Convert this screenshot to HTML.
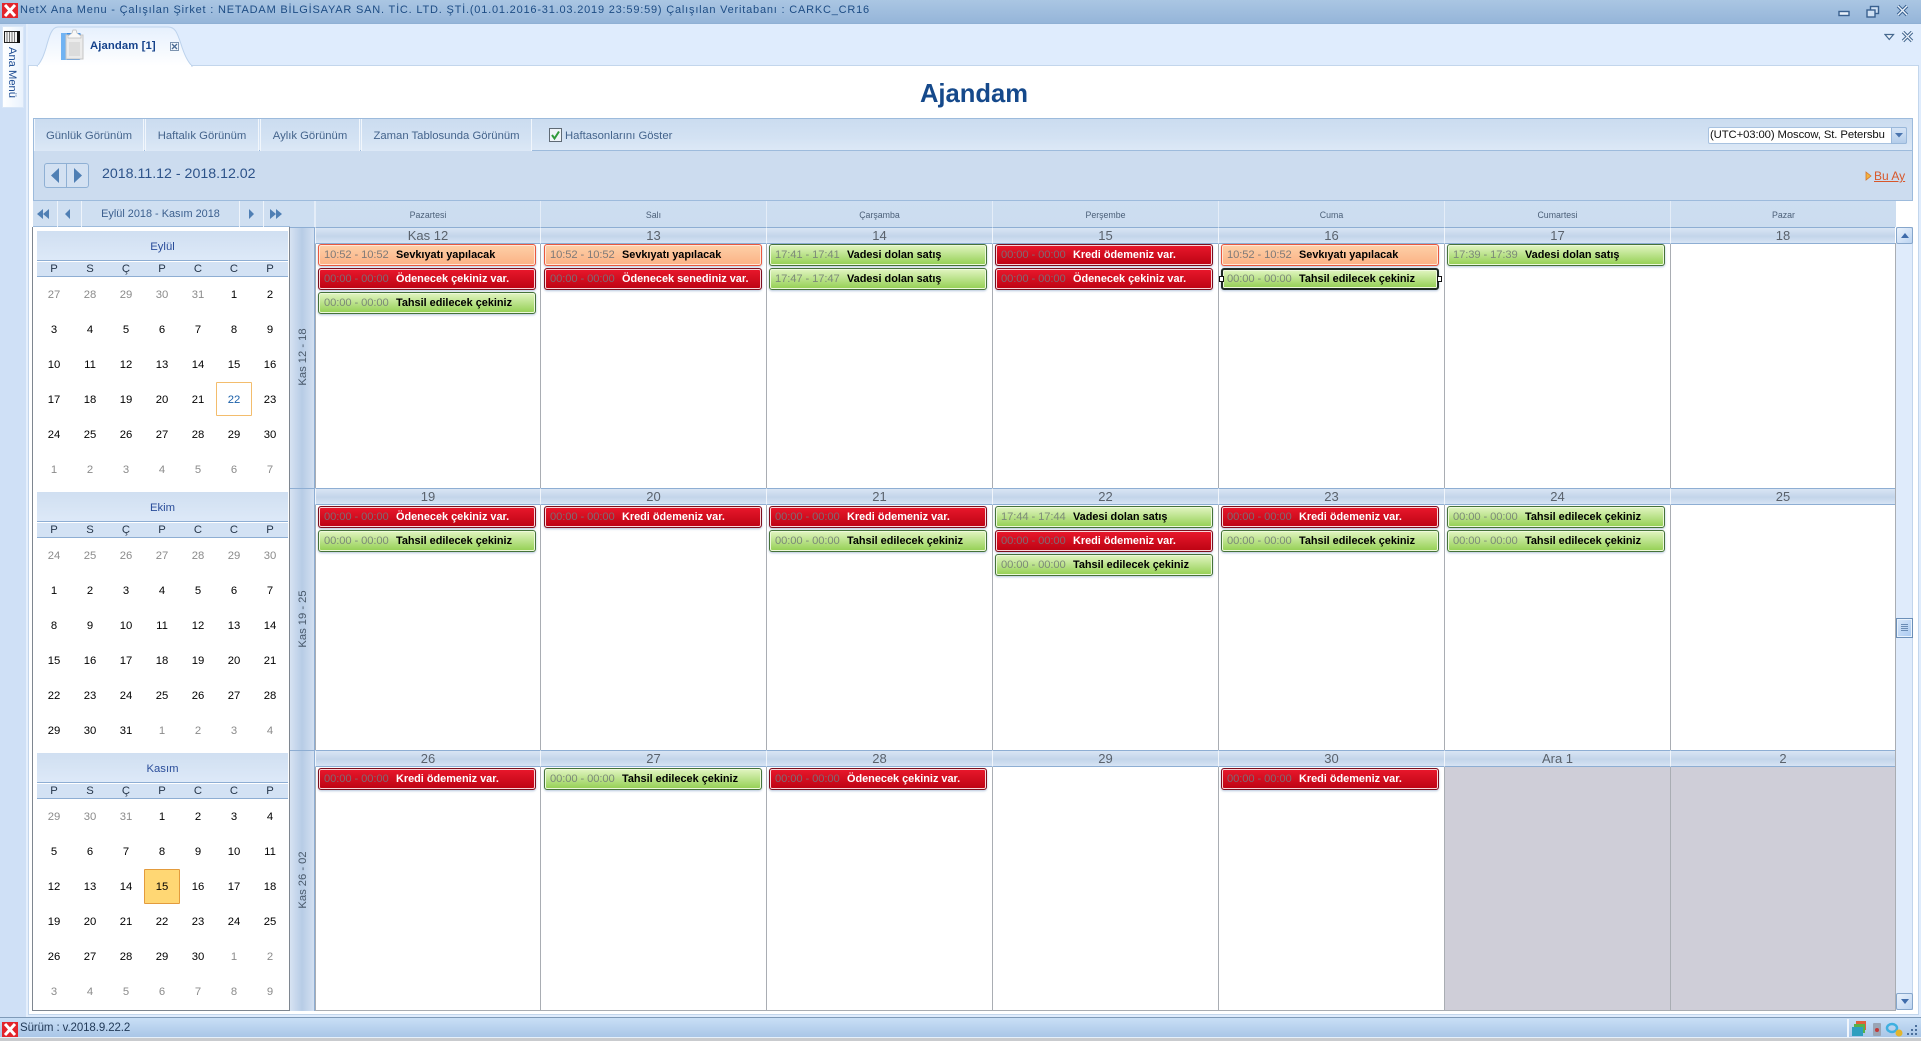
<!DOCTYPE html>
<html lang="tr"><head><meta charset="utf-8"><title>NetX Ajandam</title>
<style>
html,body{margin:0;padding:0}
body{width:1921px;height:1041px;position:relative;overflow:hidden;background:#dfecfd;font-family:"Liberation Sans",sans-serif;font-size:11px;color:#000}
div,span,svg{position:absolute;box-sizing:border-box}
.btn{top:119px;height:32px;line-height:34px;text-align:center;color:#44648c;font-size:11.3px;background:linear-gradient(#cbdcf0,#d3e2f3 60%,#dce8f6);border-right:1px solid #f1f6fc;border-left:1px solid #f1f6fc}
.dn{top:201px;height:26px;line-height:29px;text-align:center;font-size:8.8px;color:#4b5f78;background:linear-gradient(#cddef1,#cbdcef);border-left:1px solid #e4edf8}
.dt{top:227px;height:17px;line-height:16px;text-align:center;font-size:13px;color:#5a626c;background:linear-gradient(#d9e5f4,#c3d5ea 55%,#d7e4f4);border-top:1px solid #8eaed3;border-bottom:1px solid #8eaed3;border-left:1px solid #f0f5fb}
.r2{top:488px}.r3{top:750px}
.vl{width:1px;background:#a9adb3;top:243px;height:767px}
.wk{left:290px;width:25px;background:linear-gradient(90deg,#d7e3f2,#b7cce6 50%,#d3e0f1);border-right:1px solid #8eaed3;border-top:1px solid #8eaed3}
.wt{left:-37px;width:100px;text-align:center;font-size:11.2px;color:#49596b;transform:rotate(-90deg);line-height:14px}
.e{width:218px;height:22px;border-radius:3px;line-height:20px;font-size:10.9px;font-weight:bold;white-space:nowrap;box-shadow:0 1px 2px rgba(120,150,190,.55)}
.e i{position:absolute;left:5px;top:0;font-style:normal;font-weight:normal;font-size:11.2px;letter-spacing:-.1px}
.e b{position:absolute;left:77px;top:0}
.o{background:linear-gradient(#fdd0a8,#fcb285);border:1px solid #e9573e;color:#000;box-shadow:inset 0 0 0 1px #ffe8d6,0 1px 2px rgba(120,150,190,.55)}
.o i{color:#7f7a78}
.r{background:linear-gradient(#e9182c,#bc0313);border:1px solid #7d0d1c;color:#fff;box-shadow:inset 0 0 0 1px #f9d6d9,0 1px 2px rgba(120,150,190,.55)}
.r i{color:#7e6a72}
.g{background:linear-gradient(#e2f5c2,#93cf52);border:1px solid #457239;color:#000;box-shadow:inset 0 0 0 1px #eef9db,0 1px 2px rgba(120,150,190,.55)}
.g i{color:#7c8a78}
.mh{left:37px;width:251px;height:30px;line-height:32px;text-align:center;font-size:11.3px;color:#2a4d9a;background:linear-gradient(#d0dff1,#dde9f8);border-bottom:1px solid #8eaed3}
.dw{left:37px;width:251px;height:15px;background:#d3e2f4;border-bottom:1px solid #8eaed3;display:grid;grid-template-columns:repeat(7,36px);font-size:11.3px;line-height:15px;text-align:center;color:#26364a;text-indent:-2px}
.dw span,.m span{position:static}
.m{left:36px;width:252px;display:grid;grid-template-columns:repeat(7,36px);grid-auto-rows:35px;line-height:35px;text-align:center;font-size:11.3px;color:#000}
.m u{text-decoration:none;color:#8b8b8b}
</style></head>
<body>
<!-- title bar -->
<div style="left:0;top:0;width:1921px;height:24px;background:linear-gradient(#aac6e3,#95b5d9);border-bottom:1px solid #8fb0d4"></div>
<svg style="left:2px;top:3px" width="16" height="15" viewBox="0 0 16 15"><rect width="16" height="15" fill="#e3242b"/><path d="M3 2l10 11M13 2L3 13" stroke="#fff" stroke-width="3"/></svg>
<div style="left:20px;top:3px;line-height:15px;font-size:11px;letter-spacing:.8px;color:#1d4c84;white-space:nowrap">NetX Ana Menu - Çalışılan Şirket : NETADAM BİLGİSAYAR SAN. TİC. LTD. ŞTİ.(01.01.2016-31.03.2019 23:59:59) Çalışılan Veritabanı : CARKC_CR16</div>
<svg style="left:1836px;top:4px" width="80" height="14" viewBox="0 0 80 14" fill="none" stroke="#39608f"><rect x="3" y="7.500" width="10" height="4" fill="#e8f0fa" stroke-width="1.400"/><rect x="34.500" y="2.500" width="8" height="7" fill="#cfe0f3" stroke-width="1.400"/><rect x="31" y="6" width="8" height="7" fill="#cfe0f3" stroke-width="1.400"/><path d="M62 2l9 9M71 2l-9 9" stroke="#39608f" stroke-width="3.400"/><path d="M62 2l9 9M71 2l-9 9" stroke="#eaf2fb" stroke-width="1.400"/></svg>
<!-- left strip -->
<div style="left:0;top:24px;width:26px;height:993px;background:#cfe0f6"></div>
<div style="left:26px;top:24px;width:2px;height:993px;background:#e5effc"></div>
<div style="left:2px;top:26px;width:22px;height:82px;background:linear-gradient(90deg,#fff,#e9f2fd);border:1px solid #d8e6f7"></div>
<svg style="left:4px;top:31px" width="16" height="12" viewBox="0 0 16 12"><rect x=".5" y=".5" width="15" height="11" fill="#f4f4f4" stroke="#222"/><path d="M3 1v10M5.500 1v10M8 1v10M10.500 1v10" stroke="#777"/><rect x="13" y="0" width="3" height="12" fill="#111"/></svg>
<div style="left:-13px;top:65px;width:50px;height:14px;line-height:14px;text-align:center;font-size:11.2px;color:#1d4c93;transform:rotate(90deg);white-space:nowrap">Ana Menü</div>
<!-- tab strip -->
<div style="left:28px;top:65px;width:1891px;height:950px;background:#fff;border:1px solid #c3d6ec"></div>
<svg style="left:36px;top:26px" width="160" height="41" viewBox="0 0 160 41"><defs><linearGradient id="tg" x1="0" x2="0" y1="0" y2="1"><stop offset="0" stop-color="#e6f0fd"/><stop offset="1" stop-color="#fff"/></linearGradient></defs><path d="M1.500 40C6 34 7.500 30 10 22 13.500 9 16 1 22 1H132C139 1 141 6 145 18 148 28 151 35 156 40Z" fill="url(#tg)" stroke="#bcd2ec"/><path d="M2 40H155" stroke="#fff" stroke-width="2"/></svg>
<svg style="left:60px;top:29px" width="24" height="32" viewBox="0 0 24 32"><rect x="1" y="4" width="20" height="27" rx="2" fill="#3e8fe6"/><rect x="1" y="4" width="6" height="27" fill="#70b3f3"/><rect x="6" y="6" width="17" height="24" fill="#ebebeb" stroke="#c6c6c6"/><path d="M8 7l4-3 1-3h3l1 3 4 3v2H8z" fill="#f8f8f8" stroke="#bbb" stroke-width=".7"/><rect x="9" y="13" width="11" height="14" fill="#dcdcdc"/></svg>
<div style="left:90px;top:39px;line-height:14px;font-size:11.3px;font-weight:bold;color:#15428b;white-space:nowrap;letter-spacing:.1px">Ajandam [1]</div>
<svg style="left:170px;top:42px" width="9" height="9" viewBox="0 0 9 9"><rect x=".5" y=".5" width="8" height="8" fill="#f3f7fc" stroke="#7d94b0"/><path d="M2 2l5 5M7 2L2 7" stroke="#4a6a92" stroke-width="1.300"/></svg>
<svg style="left:1884px;top:31px" width="30" height="12" viewBox="0 0 30 12" fill="none"><path d="M1 3.500h8.500L5.250 8.500Z" fill="#eef4fc" stroke="#45688f" stroke-width="1.200"/><path d="M19 1l9 9M28 1l-9 9" stroke="#45688f" stroke-width="3.400"/><path d="M19 1l9 9M28 1l-9 9" stroke="#eef4fc" stroke-width="1.300"/></svg>
<!-- heading -->
<div style="left:874px;top:77px;width:200px;text-align:center;line-height:34px;font-size:25.6px;font-weight:bold;color:#15498b;white-space:nowrap">Ajandam</div>
<!-- toolbar -->
<div style="left:33px;top:118px;width:1880px;height:83px;background:#ccdcef;border:1px solid #9dbbdc"></div>
<div style="left:33px;top:119px;width:1880px;height:32px;background:linear-gradient(#cbdcf0,#d3e2f3 60%,#dce8f6);border-bottom:1px solid #9dbbdc;border-left:1px solid #9dbbdc;border-right:1px solid #9dbbdc"></div>
<div class="btn" style="left:34px;width:110px">Günlük Görünüm</div>
<div class="btn" style="left:145px;width:114px">Haftalık Görünüm</div>
<div class="btn" style="left:260px;width:100px">Aylık Görünüm</div>
<div class="btn" style="left:361px;width:171px">Zaman Tablosunda Görünüm</div>
<svg style="left:549px;top:128px" width="13" height="14" viewBox="0 0 13 14"><rect x=".5" y=".5" width="12" height="13" fill="#eef3f8" stroke="#5f6a75"/><path d="M3 7l2.500 3.500L10 3.500" fill="none" stroke="#2f9a3a" stroke-width="2"/></svg>
<div style="left:565px;top:128px;line-height:16px;font-size:11.3px;color:#44648c;white-space:nowrap">Haftasonlarını Göster</div>
<div style="left:1708px;top:127px;width:199px;height:17px;background:#fff;border:1px solid #a8c2e0;border-radius:2px"></div>
<div style="left:1710px;top:127px;line-height:16px;font-size:11.3px;color:#111;white-space:nowrap;letter-spacing:-.1px">(UTC+03:00) Moscow, St. Petersbu</div>
<div style="left:1891px;top:127px;width:16px;height:17px;background:linear-gradient(#d5e4f6,#b4cdea);border:1px solid #9ab8da;border-radius:0 2px 2px 0"></div>
<svg style="left:1894px;top:132px" width="10" height="7" viewBox="0 0 10 7"><path d="M1 1h8L5 5.500Z" fill="#4a74ae"/></svg>
<!-- nav arrows -->
<div style="left:44px;top:163px;width:45px;height:25px;border:1px solid #8fb0d4;border-radius:3px;background:#d3e1f2"></div>
<div style="left:66px;top:164px;width:1px;height:23px;background:#8fb0d4"></div>
<svg style="left:50px;top:168px" width="36" height="15" viewBox="0 0 36 15"><path d="M9 0v15L1 7.500Z" fill="#4f7fb4"/><path d="M24 0v15l8-7.500Z" fill="#4f7fb4"/></svg>
<div style="left:102px;top:165px;line-height:18px;font-size:14.2px;color:#2c5289;white-space:nowrap">2018.11.12 - 2018.12.02</div>
<svg style="left:1865px;top:171px" width="7" height="10" viewBox="0 0 7 10"><path d="M1 1l5 4-5 4Z" fill="#f2b33d" stroke="#d6742a" stroke-width=".8"/></svg>
<div style="left:1874px;top:168px;line-height:16px;font-size:12px;color:#d8572a;text-decoration:underline;white-space:nowrap">Bu Ay</div>
<!-- mini calendar nav -->
<div style="left:33px;top:201px;width:257px;height:26px;background:#cfdff1;border-bottom:1px solid #9dbbdc"></div>
<div style="left:57px;top:201px;width:1px;height:26px;background:#eef4fb"></div><div style="left:81px;top:201px;width:1px;height:26px;background:#eef4fb"></div><div style="left:239px;top:201px;width:1px;height:26px;background:#eef4fb"></div><div style="left:263px;top:201px;width:1px;height:26px;background:#eef4fb"></div>
<svg style="left:37px;top:208px" width="248" height="12" viewBox="0 0 248 12" fill="#4f7fb4"><path d="M6 1v10L0 6ZM12 1v10L6 6ZM33 1v10l-5-5Z"/><path d="M212 1v10l5-5ZM233 1v10l6-5ZM239 1v10l6-5Z"/></svg>
<div style="left:82px;top:207px;width:157px;text-align:center;line-height:15px;font-size:10.9px;color:#3b5f8e;white-space:nowrap">Eylül 2018 - Kasım 2018</div>
<!-- mini calendar panel -->
<div style="left:32px;top:227px;width:258px;height:784px;background:#fff;border:1px solid #7e8690;border-top:0"></div>
<div class="mh" style="top:231px">Eylül</div>
<div class="dw" style="top:262px"><span>P</span><span>S</span><span>Ç</span><span>P</span><span>C</span><span>C</span><span>P</span></div>
<div style="left:216px;top:382px;width:36px;height:34px;border:1px solid #f3bd6d;border-radius:1px"></div>
<div class="m" style="top:278px"><span><u>27</u></span><span><u>28</u></span><span><u>29</u></span><span><u>30</u></span><span><u>31</u></span><span>1</span><span>2</span><span>3</span><span>4</span><span>5</span><span>6</span><span>7</span><span>8</span><span>9</span><span>10</span><span>11</span><span>12</span><span>13</span><span>14</span><span>15</span><span>16</span><span>17</span><span>18</span><span>19</span><span>20</span><span>21</span><span style="color:#1a5fa8">22</span><span>23</span><span>24</span><span>25</span><span>26</span><span>27</span><span>28</span><span>29</span><span>30</span><span><u>1</u></span><span><u>2</u></span><span><u>3</u></span><span><u>4</u></span><span><u>5</u></span><span><u>6</u></span><span><u>7</u></span></div>
<div class="mh" style="top:492px">Ekim</div>
<div class="dw" style="top:523px"><span>P</span><span>S</span><span>Ç</span><span>P</span><span>C</span><span>C</span><span>P</span></div>
<div class="m" style="top:539px"><span><u>24</u></span><span><u>25</u></span><span><u>26</u></span><span><u>27</u></span><span><u>28</u></span><span><u>29</u></span><span><u>30</u></span><span>1</span><span>2</span><span>3</span><span>4</span><span>5</span><span>6</span><span>7</span><span>8</span><span>9</span><span>10</span><span>11</span><span>12</span><span>13</span><span>14</span><span>15</span><span>16</span><span>17</span><span>18</span><span>19</span><span>20</span><span>21</span><span>22</span><span>23</span><span>24</span><span>25</span><span>26</span><span>27</span><span>28</span><span>29</span><span>30</span><span>31</span><span><u>1</u></span><span><u>2</u></span><span><u>3</u></span><span><u>4</u></span></div>
<div class="mh" style="top:753px">Kasım</div>
<div class="dw" style="top:784px"><span>P</span><span>S</span><span>Ç</span><span>P</span><span>C</span><span>C</span><span>P</span></div>
<div style="left:144px;top:869px;width:36px;height:35px;background:#ffd774;border:1px solid #e39b3d;border-radius:1px"></div>
<div class="m" style="top:800px"><span><u>29</u></span><span><u>30</u></span><span><u>31</u></span><span>1</span><span>2</span><span>3</span><span>4</span><span>5</span><span>6</span><span>7</span><span>8</span><span>9</span><span>10</span><span>11</span><span>12</span><span>13</span><span>14</span><span>15</span><span>16</span><span>17</span><span>18</span><span>19</span><span>20</span><span>21</span><span>22</span><span>23</span><span>24</span><span>25</span><span>26</span><span>27</span><span>28</span><span>29</span><span>30</span><span><u>1</u></span><span><u>2</u></span><span><u>3</u></span><span><u>4</u></span><span><u>5</u></span><span><u>6</u></span><span><u>7</u></span><span><u>8</u></span><span><u>9</u></span></div>
<!-- scheduler -->
<div style="left:290px;top:201px;width:25px;height:26px;background:#cddef1;border-right:1px solid #e4edf8"></div>
<div class="dn" style="left:315px;width:225px">Pazartesi</div><div class="dn" style="left:540px;width:226px">Salı</div><div class="dn" style="left:766px;width:226px">Çarşamba</div><div class="dn" style="left:992px;width:226px">Perşembe</div><div class="dn" style="left:1218px;width:226px">Cuma</div><div class="dn" style="left:1444px;width:226px">Cumartesi</div><div class="dn" style="left:1670px;width:226px">Pazar</div>
<div style="left:315px;top:243px;width:1581px;height:768px;background:#fff;border-bottom:1px solid #a9adb3"></div>
<div style="left:1444px;top:767px;width:452px;height:243px;background:#cfced8"></div>
<div class="vl" style="left:315px"></div><div class="vl" style="left:540px"></div><div class="vl" style="left:766px"></div><div class="vl" style="left:992px"></div><div class="vl" style="left:1218px"></div><div class="vl" style="left:1444px"></div><div class="vl" style="left:1670px"></div><div class="vl" style="left:1895px"></div>
<div class="wk" style="top:227px;height:261px"><div class="wt" style="top:122px">Kas 12 - 18</div></div>
<div class="wk" style="top:488px;height:262px"><div class="wt" style="top:123px">Kas 19 - 25</div></div>
<div class="wk" style="top:750px;height:261px"><div class="wt" style="top:122px">Kas 26 - 02</div></div>
<div class="dt" style="left:315px;width:225px">Kas 12</div><div class="dt" style="left:540px;width:226px">13</div><div class="dt" style="left:766px;width:226px">14</div><div class="dt" style="left:992px;width:226px">15</div><div class="dt" style="left:1218px;width:226px">16</div><div class="dt" style="left:1444px;width:226px">17</div><div class="dt" style="left:1670px;width:225px">18</div>
<div class="dt r2" style="left:315px;width:225px">19</div><div class="dt r2" style="left:540px;width:226px">20</div><div class="dt r2" style="left:766px;width:226px">21</div><div class="dt r2" style="left:992px;width:226px">22</div><div class="dt r2" style="left:1218px;width:226px">23</div><div class="dt r2" style="left:1444px;width:226px">24</div><div class="dt r2" style="left:1670px;width:225px">25</div>
<div class="dt r3" style="left:315px;width:225px">26</div><div class="dt r3" style="left:540px;width:226px">27</div><div class="dt r3" style="left:766px;width:226px">28</div><div class="dt r3" style="left:992px;width:226px">29</div><div class="dt r3" style="left:1218px;width:226px">30</div><div class="dt r3" style="left:1444px;width:226px">Ara 1</div><div class="dt r3" style="left:1670px;width:225px">2</div>
<!-- events row 1 -->
<div class="e o" style="left:318px;top:244px"><i>10:52 - 10:52</i><b>Sevkıyatı yapılacak</b></div>
<div class="e r" style="left:318px;top:268px"><i>00:00 - 00:00</i><b>Ödenecek çekiniz var.</b></div>
<div class="e g" style="left:318px;top:292px"><i>00:00 - 00:00</i><b>Tahsil edilecek çekiniz</b></div>
<div class="e o" style="left:544px;top:244px"><i>10:52 - 10:52</i><b>Sevkıyatı yapılacak</b></div>
<div class="e r" style="left:544px;top:268px"><i>00:00 - 00:00</i><b>Ödenecek senediniz var.</b></div>
<div class="e g" style="left:769px;top:244px"><i>17:41 - 17:41</i><b>Vadesi dolan satış</b></div>
<div class="e g" style="left:769px;top:268px"><i>17:47 - 17:47</i><b>Vadesi dolan satış</b></div>
<div class="e r" style="left:995px;top:244px"><i>00:00 - 00:00</i><b>Kredi ödemeniz var.</b></div>
<div class="e r" style="left:995px;top:268px"><i>00:00 - 00:00</i><b>Ödenecek çekiniz var.</b></div>
<div class="e o" style="left:1221px;top:244px"><i>10:52 - 10:52</i><b>Sevkıyatı yapılacak</b></div>
<div class="e g" style="left:1221px;top:268px;border:2px solid #1e2a24;line-height:18px"><i style="left:4px">00:00 - 00:00</i><b style="left:76px">Tahsil edilecek çekiniz</b></div>
<div style="left:1219px;top:276px;width:5px;height:6px;background:#fff;border:1px solid #111"></div><div style="left:1437px;top:276px;width:5px;height:6px;background:#fff;border:1px solid #111"></div>
<div class="e g" style="left:1447px;top:244px"><i>17:39 - 17:39</i><b>Vadesi dolan satış</b></div>
<!-- events row 2 -->
<div class="e r" style="left:318px;top:506px"><i>00:00 - 00:00</i><b>Ödenecek çekiniz var.</b></div>
<div class="e g" style="left:318px;top:530px"><i>00:00 - 00:00</i><b>Tahsil edilecek çekiniz</b></div>
<div class="e r" style="left:544px;top:506px"><i>00:00 - 00:00</i><b>Kredi ödemeniz var.</b></div>
<div class="e r" style="left:769px;top:506px"><i>00:00 - 00:00</i><b>Kredi ödemeniz var.</b></div>
<div class="e g" style="left:769px;top:530px"><i>00:00 - 00:00</i><b>Tahsil edilecek çekiniz</b></div>
<div class="e g" style="left:995px;top:506px"><i>17:44 - 17:44</i><b>Vadesi dolan satış</b></div>
<div class="e r" style="left:995px;top:530px"><i>00:00 - 00:00</i><b>Kredi ödemeniz var.</b></div>
<div class="e g" style="left:995px;top:554px"><i>00:00 - 00:00</i><b>Tahsil edilecek çekiniz</b></div>
<div class="e r" style="left:1221px;top:506px"><i>00:00 - 00:00</i><b>Kredi ödemeniz var.</b></div>
<div class="e g" style="left:1221px;top:530px"><i>00:00 - 00:00</i><b>Tahsil edilecek çekiniz</b></div>
<div class="e g" style="left:1447px;top:506px"><i>00:00 - 00:00</i><b>Tahsil edilecek çekiniz</b></div>
<div class="e g" style="left:1447px;top:530px"><i>00:00 - 00:00</i><b>Tahsil edilecek çekiniz</b></div>
<!-- events row 3 -->
<div class="e r" style="left:318px;top:768px"><i>00:00 - 00:00</i><b>Kredi ödemeniz var.</b></div>
<div class="e g" style="left:544px;top:768px"><i>00:00 - 00:00</i><b>Tahsil edilecek çekiniz</b></div>
<div class="e r" style="left:769px;top:768px"><i>00:00 - 00:00</i><b>Ödenecek çekiniz var.</b></div>
<div class="e r" style="left:1221px;top:768px"><i>00:00 - 00:00</i><b>Kredi ödemeniz var.</b></div>
<!-- scrollbar -->
<div style="left:1896px;top:227px;width:17px;height:783px;background:#dfebfb;border-right:1px solid #c2d5ec"></div>
<div style="left:1896px;top:227px;width:17px;height:17px;background:linear-gradient(135deg,#eaf2fc,#bcd4f1);border:1px solid #86a6cb;border-radius:2px"></div>
<svg style="left:1900px;top:232px" width="10" height="7" viewBox="0 0 10 7"><path d="M1 6h8L5 1Z" fill="#3f6cab"/></svg>
<div style="left:1896px;top:618px;width:17px;height:20px;background:linear-gradient(135deg,#d8e7fa,#a9c9f0);border:1px solid #6b8fb8;box-shadow:inset 0 0 0 1px #e9f2fc"></div>
<svg style="left:1900px;top:623px" width="9" height="10" viewBox="0 0 9 10" stroke="#6a8cb5"><path d="M1 1.500h7M1 3.500h7M1 5.500h7M1 7.500h7"/></svg>
<div style="left:1896px;top:993px;width:17px;height:17px;background:linear-gradient(135deg,#eaf2fc,#bcd4f1);border:1px solid #86a6cb;border-radius:2px"></div>
<svg style="left:1900px;top:998px" width="10" height="7" viewBox="0 0 10 7"><path d="M1 1h8L5 6Z" fill="#3f6cab"/></svg>
<!-- status bar -->
<div style="left:0;top:1017px;width:1921px;height:21px;background:linear-gradient(#c9dff6,#a9c6e7);border-top:1px solid #7f9ab8;border-bottom:1px solid #e6f0fa"></div>
<div style="left:0;top:1038px;width:1921px;height:3px;background:#c9cbce"></div>
<svg style="left:2px;top:1022px" width="16" height="15" viewBox="0 0 16 15"><rect width="16" height="15" fill="#e3242b"/><path d="M3 2l10 11M13 2L3 13" stroke="#fff" stroke-width="3"/></svg>
<div style="left:20px;top:1021px;line-height:15px;font-size:11.5px;color:#223a58;white-space:nowrap;letter-spacing:-.1px">Sürüm : v.2018.9.22.2</div>
<div style="left:1847px;top:1019px;width:2px;height:18px;background:#f1f6fc"></div>
<svg style="left:1851px;top:1020px" width="68" height="18" viewBox="0 0 68 18"><rect x="5" y="1" width="10" height="9" fill="#e2603a"/><rect x="3" y="4" width="11" height="9" fill="#57b24a"/><rect x="1" y="7" width="11" height="9" fill="#2f9fbf"/><rect x="22" y="3" width="8" height="13" rx="1" fill="#9aa5b5"/><circle cx="26" cy="10" r="2" fill="#c23a3a"/><ellipse cx="41" cy="8" rx="5" ry="4" fill="none" stroke="#3fb0e0" stroke-width="2.500"/><circle cx="48" cy="13" r="3.500" fill="#e3b52b"/><g fill="#4b6f9c"><rect x="64" y="5" width="2" height="2"/><rect x="60" y="9" width="2" height="2"/><rect x="64" y="9" width="2" height="2"/><rect x="56" y="13" width="2" height="2"/><rect x="60" y="13" width="2" height="2"/><rect x="64" y="13" width="2" height="2"/></g></svg>
</body></html>
